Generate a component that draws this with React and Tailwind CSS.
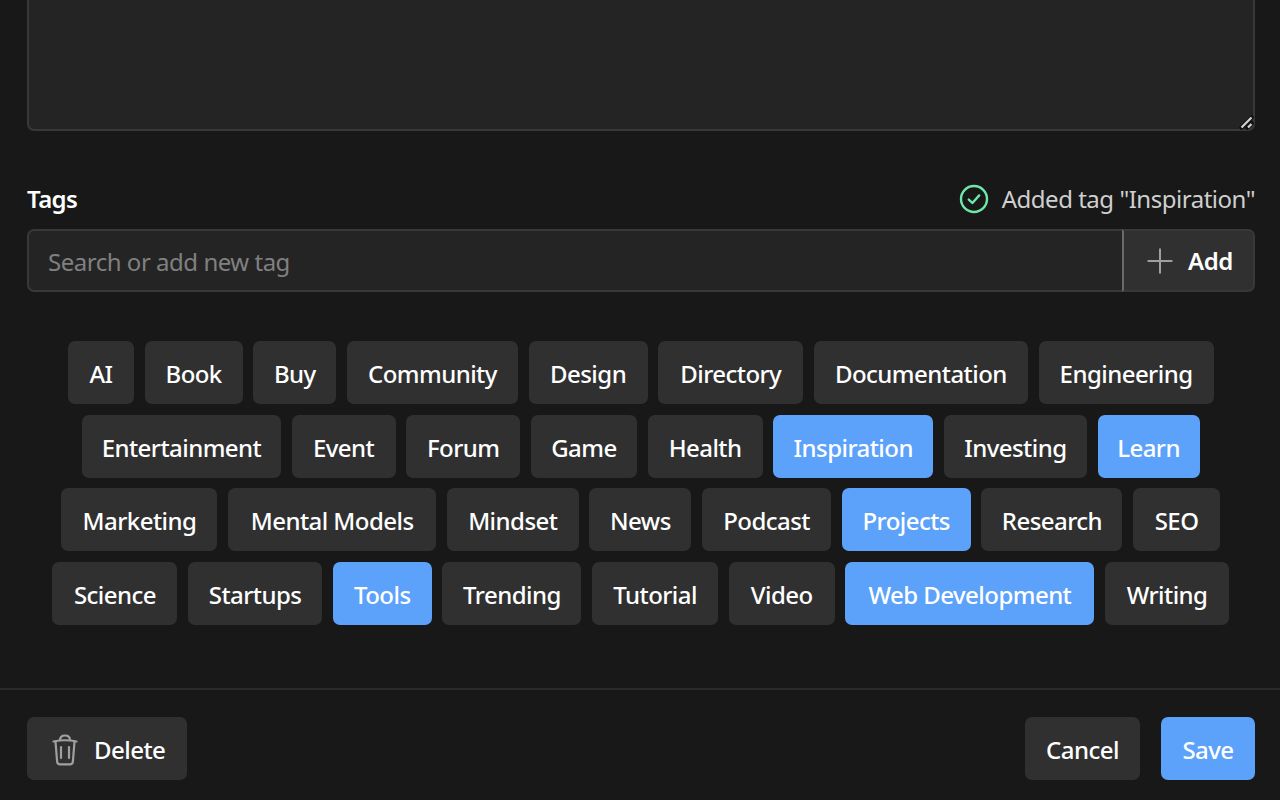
import { Plus } from "lucide-react";

const rows = [
  [["AI", "w-[66px]"], ["Book", "w-[98px]"], ["Buy", "w-[83px]"], ["Community", "w-[171px]"], ["Design", "w-[119px]"], ["Directory", "w-[145px]"], ["Documentation", "w-[214px]"], ["Engineering", "w-[175px]"]],
  [["Entertainment", "w-[199px]"], ["Event", "w-[104px]"], ["Forum", "w-[114px]"], ["Game", "w-[106px]"], ["Health", "w-[115px]"], ["Inspiration", "w-[160px]"], ["Investing", "w-[143px]"], ["Learn", "w-[102px]"]],
  [["Marketing", "w-[156px]"], ["Mental Models", "w-[208px]"], ["Mindset", "w-[132px]"], ["News", "w-[102px]"], ["Podcast", "w-[129px]"], ["Projects", "w-[129px]"], ["Research", "w-[141px]"], ["SEO", "w-[87px]"]],
  [["Science", "w-[125px]"], ["Startups", "w-[134px]"], ["Tools", "w-[99px]"], ["Trending", "w-[139px]"], ["Tutorial", "w-[126px]"], ["Video", "w-[106px]"], ["Web Development", "w-[249px]"], ["Writing", "w-[124px]"]],
];
const selected = ["Inspiration", "Learn", "Projects", "Tools", "Web Development"];

function TrashIcon() {
  return (
    <svg width="26" height="32" viewBox="0 0 26 32" fill="none" stroke="#a0a0a0" strokeWidth="2.2" strokeLinecap="round" strokeLinejoin="round">
      <path d="M1.5 7.5Q13 5 24.5 7.5" />
      <path d="M8 6.2C8 3 10 1.5 13 1.5s5 1.5 5 4.7" />
      <path d="M3.5 7.5l1.6 20a3 3 0 0 0 3 2.8h9.8a3 3 0 0 0 3-2.8l1.6-20" />
      <path d="M9 13v11M17 13v11" />
    </svg>
  );
}

function CheckCircle() {
  return (
    <svg width="30" height="30" viewBox="0 0 30 30" fill="none" stroke="#6ee7a8" strokeWidth="2.4" strokeLinecap="round" strokeLinejoin="round">
      <circle cx="15" cy="15" r="13" />
      <path d="M9.8 15.6l3.6 3.4 6.8-7.6" />
    </svg>
  );
}

export default function App() {
  return (
    <div className="h-[800px] overflow-hidden flex flex-col justify-end bg-[#181818] text-white font-['Noto_Sans','Open_Sans',sans-serif]">
      <div className="pl-[27px] pr-[25px]">
        <div className="relative">
          <textarea className="block w-full h-[300px] rounded-[7px] border-2 border-[#383838] bg-[#242424] resize-none outline-none" />
          <svg width="15" height="15" viewBox="0 0 15 15" fill="none" className="absolute right-[1px] bottom-[1px]">
            <path d="M1 14L14 1M7 14l7-7" stroke="#111111" strokeWidth="4" />
            <path d="M2.5 12.5L12.5 2.5M9 12.5l3.5-3.5" stroke="#d4d4d4" strokeWidth="2.2" />
          </svg>
        </div>
        <div className="mt-[49px] flex items-center justify-between h-[38px]">
          <span className="text-[24px] font-semibold tracking-[-0.6px]">Tags</span>
          <span className="flex items-center gap-[13px] text-[24px] text-[#cfcfcf] tracking-[-0.48px]">
            <CheckCircle />
            Added tag "Inspiration"
          </span>
        </div>
        <div className="mt-[11px] flex h-[63px]">
          <input
            placeholder="Search or add new tag"
            className="flex-1 min-w-0 rounded-l-[7px] border-2 border-r-0 border-[#383838] bg-[#242424] px-[19px] pt-[3px] text-[24px] tracking-[-0.48px] outline-none placeholder:text-[#808080]"
          />
          <button className="w-[133px] rounded-r-[7px] border-2 border-[#383838] border-l-[#6a6a6a] bg-[#303030] flex items-center pl-[16px] gap-[8px] text-[24px] font-semibold tracking-[-0.4px]">
            <Plus size={40} strokeWidth={1.2} className="text-[#a0a0a0]" />
            Add
          </button>
        </div>
      </div>
      <div className="mt-[49px] mb-[63px] pl-[1.5px] flex flex-col gap-[10.67px]">
        {rows.map((row) => (
          <div key={row[0][0]} className="flex justify-center gap-[10.67px]">
            {row.map(([t, w]) => (
              <button
                key={t}
                className={
                  selected.includes(t)
                    ? `${w} h-[63px] pt-[3px] rounded-[7px] bg-[#5ca2fb] text-[24px] font-medium tracking-[-0.55px]`
                    : `${w} h-[63px] pt-[3px] rounded-[7px] bg-[#303030] text-[24px] font-medium tracking-[-0.55px]`
                }
              >
                {t}
              </button>
            ))}
          </div>
        ))}
      </div>
      <div className="h-[112px] shrink-0 border-t-2 border-[#2a2a2a] pl-[27px] pr-[25px] pt-[27px]">
        <div className="flex items-start justify-between">
          <button className="h-[63px] w-[160px] rounded-[7px] bg-[#303030] flex items-center pl-[25px] pt-[2px] gap-[16px] text-[24px] font-medium tracking-[-0.55px]">
            <TrashIcon />
            Delete
          </button>
          <div className="flex gap-[21px]">
            <button className="h-[63px] w-[115px] pt-[2px] rounded-[7px] bg-[#303030] text-[24px] font-medium tracking-[-0.55px]">Cancel</button>
            <button className="h-[63px] w-[94px] pt-[2px] rounded-[7px] bg-[#5ca2fb] text-[24px] font-medium tracking-[-0.55px]">Save</button>
          </div>
        </div>
      </div>
    </div>
  );
}
